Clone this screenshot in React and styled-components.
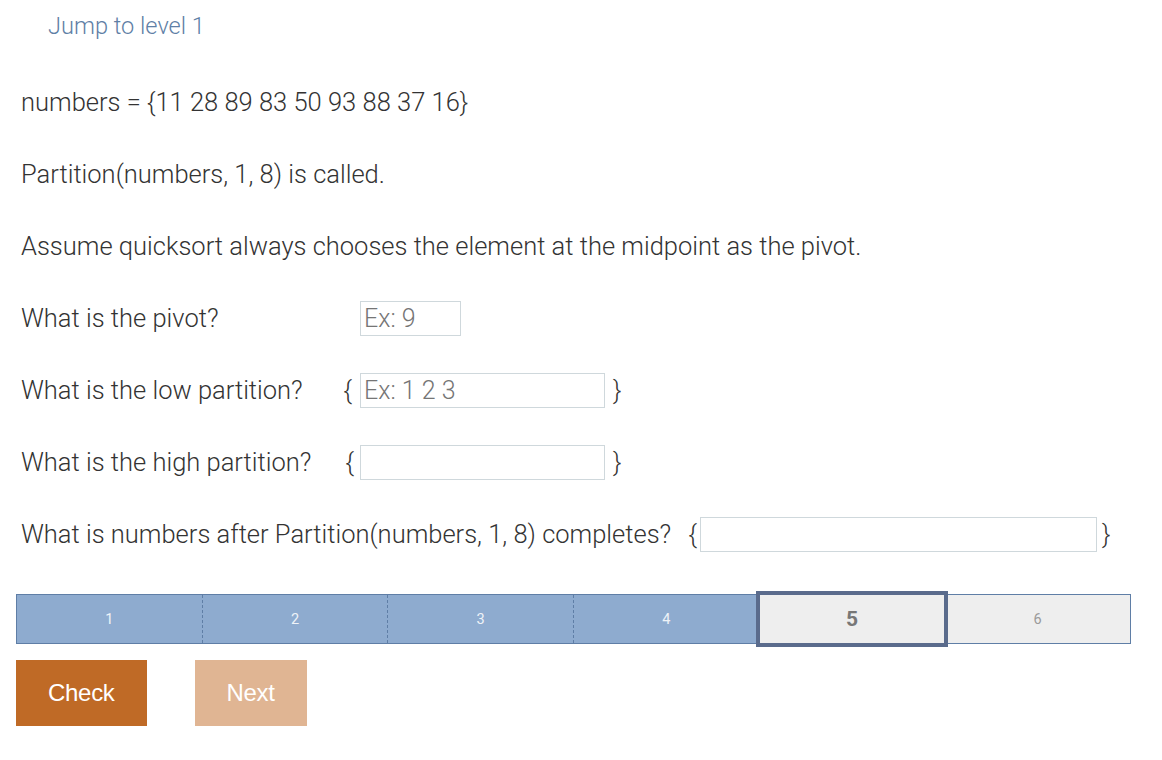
import React from "react";
import styled, { createGlobalStyle, css } from "styled-components";

const Global = createGlobalStyle`
  html, body { margin: 0; padding: 0; background: #fff; }
  body { font-family: Roboto, "Noto Sans", sans-serif; font-weight: 300; color: #333; }
  * { box-sizing: border-box; }
`;

const Page = styled.div`
  width: 1162px;
  padding: 8px 0 0 0;
  display: flex;
  flex-direction: column;
`;

const JumpLink = styled.a`
  margin-left: 48px;
  font-size: 23.6px;
  line-height: 36px;
  color: #5f7fa6;
  text-decoration: none;
  font-weight: 300;
  cursor: pointer;
  align-self: flex-start;
`;

const Body = styled.div`
  margin-top: 40px;
  padding-left: 21px;
  display: flex;
  flex-direction: column;
  gap: 36px;
`;

const Line = styled.div`
  font-size: 25.5px;
  line-height: 36px;
  height: 36px;
  display: flex;
  align-items: center;
  white-space: pre;
`;

const Label = styled.span`
  width: 314px;
  flex: none;
`;

const BraceCell = styled.span`
  width: 25px;
  flex: none;
  text-align: right;
  padding-right: ${(p) => p.$pad || 6}px;
`;

const Brace = styled.span`
  margin-left: ${(p) => p.$ml || 0}px;
  margin-right: ${(p) => p.$mr || 0}px;
`;

const Input = styled.input`
  height: 35px;
  width: ${(p) => p.$w}px;
  flex: none;
  border: 1px solid #cfd8dc;
  background: #fff;
  font-family: Roboto, sans-serif;
  font-weight: 300;
  font-size: 25px;
  color: #333;
  padding: 0 3px;
  outline: none;
  &::placeholder { color: #757575; opacity: 1; }
`;

const Bar = styled.div`
  margin: 42px 0 0 16px;
  width: 1115px;
  height: 50px;
  border: 1px solid #5f7ea6;
  display: flex;
`;

const Segment = styled.div`
  flex: 1 1 0;
  display: flex;
  align-items: center;
  justify-content: center;
  font-family: Roboto, sans-serif;
  font-size: 14.5px;
  font-weight: 400;
  background: ${(p) => (p.$done ? "#8eabcf" : "#eeeeee")};
  color: ${(p) => (p.$done ? "#eef3f8" : "#9a9a9a")};
  border-right: ${(p) => (p.$dashed ? "1px dashed #5f7ea6" : "none")};
  ${(p) =>
    p.$active &&
    css`
      position: relative;
      z-index: 1;
      margin: -4px -3px;
      border: 4px solid #5a6b8c;
      font-size: 21px;
      font-weight: 700;
      color: #777;
      background: #eeeeee;
    `}
`;

const Buttons = styled.div`
  margin: 16px 0 0 16px;
  display: flex;
  gap: 48px;
`;

const Button = styled.button`
  height: 66px;
  padding: 0 32px;
  border: none;
  font-family: "Liberation Sans", Arial, sans-serif;
  font-size: 24px;
  letter-spacing: -0.3px;
  color: #fff;
  background: ${(p) => (p.$disabled ? "#e0b593" : "#bf6a26")};
  cursor: ${(p) => (p.$disabled ? "default" : "pointer")};
`;

export default function App() {
  const segs = [1, 2, 3, 4, 5, 6];
  return (
    <>
      <Global />
      <Page>
        <JumpLink>Jump to level 1</JumpLink>
        <Body>
          <Line>numbers = {"{"}11 28 89 83 50 93 88 37 16{"}"}</Line>
          <Line>Partition(numbers, 1, 8) is called.</Line>
          <Line>Assume quicksort always chooses the element at the midpoint as the pivot.</Line>
          <Line>
            <Label>What is the pivot?</Label>
            <BraceCell />
            <Input $w={101} placeholder="Ex: 9" />
          </Line>
          <Line>
            <Label>What is the low partition?</Label>
            <BraceCell $pad={8}>{"{"}</BraceCell>
            <Input $w={245} placeholder="Ex: 1 2 3" />
            <Brace $ml={8}>{"}"}</Brace>
          </Line>
          <Line>
            <Label>What is the high partition?</Label>
            <BraceCell $pad={6}>{"{"}</BraceCell>
            <Input $w={245} />
            <Brace $ml={8}>{"}"}</Brace>
          </Line>
          <Line>
            What is numbers after Partition(numbers, 1, 8) completes?  <Brace $ml={5} $mr={3}>{"{"}</Brace>
            <Input $w={397} />
            <Brace $ml={5}>{"}"}</Brace>
          </Line>
        </Body>
        <Bar>
          {segs.map((n) => (
            <Segment key={n} $done={n < 5} $dashed={n < 4} $active={n === 5}>
              {n}
            </Segment>
          ))}
        </Bar>
        <Buttons>
          <Button>Check</Button>
          <Button $disabled>Next</Button>
        </Buttons>
      </Page>
    </>
  );
}
